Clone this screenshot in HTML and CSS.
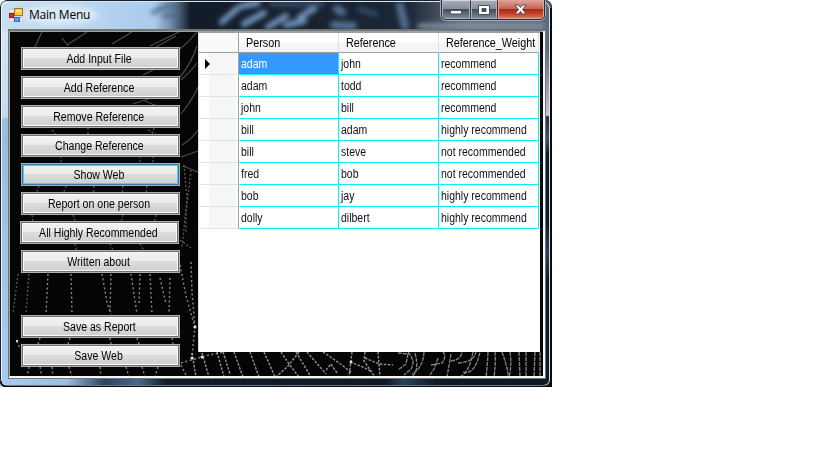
FILE: index.html
```html
<!DOCTYPE html>
<html lang="en">
<head>
<meta charset="utf-8">
<title>Main Menu</title>
<link rel="stylesheet" href="styles.css">
</head>
<body>
<div class="window">
  <svg class="glass" width="552" height="387" viewBox="0 0 552 387" aria-hidden="true">
    <defs>
      <linearGradient id="sky" x1="0" x2="1"><stop offset="0" stop-color="#c9def1"/><stop offset=".13" stop-color="#bdd8f1"/><stop offset=".28" stop-color="#a9cbed"/><stop offset=".31" stop-color="#6f8bab"/><stop offset=".345" stop-color="#131c29"/><stop offset=".74" stop-color="#1b2637"/><stop offset=".84" stop-color="#66707d"/><stop offset="1" stop-color="#59677a"/></linearGradient>
      <linearGradient id="left" x1="0" x2="0" y1="0" y2="1"><stop offset="0" stop-color="#d7e5f3"/><stop offset=".24" stop-color="#c6d9eb"/><stop offset=".25" stop-color="#9dbcdb"/><stop offset="1" stop-color="#a9cbed"/></linearGradient>
      <linearGradient id="right" x1="0" x2="0" y1="0" y2="1"><stop offset="0" stop-color="#526780"/><stop offset=".1" stop-color="#626b78"/><stop offset=".275" stop-color="#c4c6c9"/><stop offset=".28" stop-color="#252f3c"/><stop offset=".34" stop-color="#3e536c"/><stop offset=".38" stop-color="#101923"/><stop offset=".56" stop-color="#101923"/><stop offset=".64" stop-color="#2c415d"/><stop offset=".72" stop-color="#101923"/></linearGradient>
      <linearGradient id="bottom" x1="0" x2="1"><stop offset="0" stop-color="#a9cbed"/><stop offset=".12" stop-color="#9cbee0"/><stop offset=".19" stop-color="#2c4260"/><stop offset=".25" stop-color="#4b678a"/><stop offset=".3" stop-color="#111b29"/><stop offset=".7" stop-color="#101923"/><stop offset=".73" stop-color="#2c415d"/><stop offset=".79" stop-color="#101923"/></linearGradient>
      <filter id="soft" x="-20%" y="-50%" width="140%" height="200%"><feGaussianBlur stdDeviation="2.600"/></filter>
      <clipPath id="bar"><rect x="1" y="1" width="550" height="29"/></clipPath>
    </defs>
    <rect width="552" height="31" fill="url(#sky)"/>
    <rect y="31" width="9" height="356" fill="url(#left)"/>
    <rect x="543" y="12" width="9" height="375" fill="url(#right)"/>
    <rect y="378" width="552" height="9" fill="url(#bottom)"/>
    <g clip-path="url(#bar)"><g filter="url(#soft)" fill="none" stroke-linecap="round">
      <path d="M153 13q10-8 24-7M164 16l14-1" stroke="#4d6685" stroke-width="4"/>
      <path d="M222 22l16-14M242 6l16-3M244 24l20-11M268 27l18-11M286 25l18-4M300 17l14-8" stroke="#7195bd" stroke-width="6"/>
      <path d="M334 25l19 1M337 9l5 3M400 6l5 20" stroke="#536f90" stroke-width="8"/>
      <path d="M272 4h50M360 9l15 5" stroke="#304967" stroke-width="6"/>
      <path d="M420 26h122" stroke="#8695a8" stroke-width="5"/>
      <ellipse cx="60" cy="15" rx="38" ry="10" fill="#dbe8f5" stroke="none"/>
    </g></g>
    <path d="M1.500 380V8Q1.500 2 8 2.500" fill="none" stroke="#eff7ff"/>
    <path d="M7 1.500h538M544 2q5 1 5.500 7v370q0 6-6 6.500H8q-6 0-6.500-6" fill="none" stroke="#dce4ec"/>
    <path d="M.5 380V7Q.5.500 7 .500h538q6.500 0 6.500 7" fill="none" stroke="#172131"/>
    <path d="M551 8v378.500H7q-6 0-6.500-6" fill="none" stroke="#080c12" stroke-width="2"/>
  </svg>

  <header class="titlebar">
    <svg class="app-icon" width="14" height="14" viewBox="0 0 14 14" aria-hidden="true">
      <path d="M0 1h6v4H0zM0 10h5v4H0zM11 9h3v5h-3z" fill="#e9ecee" stroke="#a8afb5" stroke-width=".6"/>
      <rect x="5.500" y=".5" width="8" height="7" fill="#f8ca36" stroke="#a77915"/><path d="M7 2h5v2H7z" fill="#ffeb9c"/>
      <rect x=".5" y="5.500" width="4" height="4" fill="#d8322b" stroke="#931c18"/>
      <rect x="5.500" y="9.500" width="5" height="4" fill="#5a9bec" stroke="#3c70bc"/>
    </svg>
    <h1 class="title">Main Menu</h1>
    <div class="controls">
      <span class="control minimize"><svg width="12" height="6" viewBox="0 0 12 6"><path d="M.5 1.500h11v3.500H.5z" fill="#fff" stroke="#4a515d"/></svg></span>
      <span class="control maximize"><svg width="12" height="10" viewBox="0 0 12 10"><path fill-rule="evenodd" d="M.5.500h11v9H.5zM4 3.500v3h4v-3z" fill="#fff" stroke="#4a515d"/></svg></span>
      <span class="control close"><svg width="13" height="11" viewBox="0 0 13 11"><path d="M.8 1h3.700l2 2.500L8.500 1h3.700L8.500 5.500l3.700 4.500H8.500l-2-2.500-2 2.500H.8l3.700-4.500z" fill="#fff" stroke="#584b52"/></svg></span>
    </div>
  </header>

  <main class="client">
    <svg class="web" width="532" height="345" viewBox="10 32 532 345" fill="none" aria-hidden="true">
      <g stroke="#858585" stroke-width="1.200" opacity=".55">
        <path d="M33 51L42 32M62 38l6 8M67 45l20-13M112 44l20-12M150 46l29-14M176 36l-20 11M180 49q9-7 17-17M180 77q11-13 17-31M181 80q11-10 16-17M181 114q12-15 17-27M182 145q10-6 16-15M143 75l18-9M133 104l24-8M145 101l12 5M181 157q9-3 17-6M183 166l15 6"/>
      </g>
      <g stroke="#c3c3c3" stroke-width="1.300" stroke-dasharray="2 2" opacity=".45">
        <path d="M52 130l4 5M88 128v6M154 128l-2 6M148 130l8 4M140 156v8M153 156v8M61 156v8M39 186l-3 8M66 186l-3 8M94 186l-1 8M123 186l-1 8M147 186l-1 8M32 215l1 8M73 215l3 8M123 215l-2 8M156 215l-2 8M75 244l2 8M110 244l4 8M140 244l5 8M184 165l3 33-5 50M191 170l-5 43 0 20M180 240l11 8M18 274l-5 40M29 274l-3 38"/>
      </g>
      <g stroke="#d0d0d0" stroke-width="1.400" stroke-dasharray="2 2.500" opacity=".65">
        <path d="M48 274l-2 40M71 274l1 40M102 274l5 29 4 11M111 274l-1 40M131 274l6 40M140 274l-1 30M150 274l2 40M160 278l6 26M170 278l-1 36M180 265l6 31 9 31-3 28M191 262l1 30 3 35M17 341l3 8M40 338l-2 6M70 338l-2 6M110 338l1 6M137 338l2 6M172 338l1 6M29 367l-2 10M40 367l2 10M52 367l1 10M69 367l3 10M100 367l1 10M126 367l3 10M142 367l3 10M158 367l-3 10M181 365l6 12M181 363l28-8 16-3"/>
      </g>
      <g stroke="#dadada" stroke-width="1.400" stroke-dasharray="2.500 1.500" opacity=".68">
        <path d="M192 353l4 24M202 353l7 24M217 352l7 25M223 352l7 22M234 352l9 25M250 352l9 25M264 352l11 25M281 352l8 12 10 13M299 352l-11 14-12 11M296 352l15 25M307 352l19 22M326 370l5-6 6 9M323 352l19 13 10 8M352 352l-3 25M365 352l-1 9 11 16M365 358l14 6 14 1M350 362l13 5 9 5M378 352l2 25"/>
      </g>
      <g stroke="#d4d4d4" stroke-width="1.300" stroke-dasharray="4 1" opacity=".62">
        <path d="M398 353l10 1-2 10-8 6M408 352q8 9 3 17l-7 6M415 353q5 19-4 24M424 352q-1 16-12 22M431 365l11-2q5-7 1-11M438 358l-4 11-4 6M451 354l-4 23M451 361q10-1 11-9M458 363q16-1 18-11M473 352q-4 22-14 25M463 372q13 4 18-25M488 352q-1 20-2 25M495 352q1 10-1 25M502 352q7 20 6 25M510 352q2 14-1 25M519 352l1 25M526 352v25M535 352l-1 25M540 352v25"/>
      </g>
      <g fill="#ddd"><circle cx="195" cy="327" r="1.600"/><circle cx="192" cy="358" r="1.600"/><circle cx="17" cy="341" r="1.200"/><circle cx="202" cy="357" r="1.500"/><circle cx="351" cy="362" r="1.500"/></g>
    </svg>

    <nav class="menu">
      <button class="btn"><span>Add Input File</span></button>
      <button class="btn"><span>Add Reference</span></button>
      <button class="btn"><span>Remove Reference</span></button>
      <button class="btn"><span>Change Reference</span></button>
      <button class="btn focused"><span>Show Web</span></button>
      <button class="btn"><span>Report on one person</span></button>
      <button class="btn shifted"><span>All Highly Recommended</span></button>
      <button class="btn"><span>Written about</span></button>
      <button class="btn save"><span>Save as Report</span></button>
      <button class="btn"><span>Save Web</span></button>
    </nav>

    <section class="grid">
      <table>
        <colgroup><col class="stub"><col class="data"><col class="data"><col class="data"></colgroup>
        <thead><tr><th></th><th><span>Person</span></th><th><span>Reference</span></th><th><span>Reference_Weight</span></th></tr></thead>
        <tbody>
          <tr><th><i class="pointer"></i></th><td class="selected"><span>adam</span></td><td><span>john</span></td><td><span>recommend</span></td></tr>
          <tr><th></th><td><span>adam</span></td><td><span>todd</span></td><td><span>recommend</span></td></tr>
          <tr><th></th><td><span>john</span></td><td><span>bill</span></td><td><span>recommend</span></td></tr>
          <tr><th></th><td><span>bill</span></td><td><span>adam</span></td><td><span>highly recommend</span></td></tr>
          <tr><th></th><td><span>bill</span></td><td><span>steve</span></td><td><span>not recommended</span></td></tr>
          <tr><th></th><td><span>fred</span></td><td><span>bob</span></td><td><span>not recommended</span></td></tr>
          <tr><th></th><td><span>bob</span></td><td><span>jay</span></td><td><span>highly recommend</span></td></tr>
          <tr><th></th><td><span>dolly</span></td><td><span>dilbert</span></td><td><span>highly recommend</span></td></tr>
        </tbody>
      </table>
    </section>
  </main>
</div>
</body>
</html>
```
FILE: styles.css
```css
* { box-sizing: border-box; }
body { margin: 0; background: #fff; color: #000; font: 12px "Liberation Sans", Arial, sans-serif; overflow: hidden; }
.window { position: relative; width: 552px; height: 387px; padding: 0 6px 8px 8px; display: flex; flex-direction: column; border-radius: 7px 7px 0 0; overflow: hidden; }
.glass { position: absolute; left: 0; top: 0; }
.titlebar { position: relative; height: 29px; display: flex; align-items: flex-start; padding-left: 1px; flex: none; }
.app-icon { margin-top: 8px; }
.title { margin: 6px 0 0 6px; font: 12px/18px "Open Sans", "Noto Sans", sans-serif; letter-spacing: -.22px; }
.controls { display: flex; margin: 0 1px 0 auto; width: 104px; height: 20px; border: 1px solid #242d39; border-top: 0; border-radius: 0 0 5px 5px; overflow: hidden; box-shadow: 0 0 0 1px #a1abb7; }
.control { display: flex; align-items: center; justify-content: center; width: 28px; border: 1px solid #a9b2bd; border-top-color: #d3d7dd; background: linear-gradient(#a7acb4 0, #858d98 47%, #424b59 49%, #7a8999 100%); }
.control + .control { border-left-color: #303947; width: 27px; box-shadow: inset 1px 0 #a9b2bd; }
.control.close { width: 47px; border-color: #dda398; border-left-color: #592219; background: linear-gradient(#dc9e91 0, #c46353 46%, #a92718 49%, #c64b30 80%, #dd785d 100%); box-shadow: inset 1px 0 #dda398; }
.control + .control.close { width: 47px; }
.minimize svg { margin-top: 4px; }
.client { position: relative; flex: 1; display: flex; border: solid #737873; border-width: 2px 1px 1px; border-right-color: #f5f5f5; border-bottom-color: #f5f5f5; outline: 1px solid #6d757b; outline-offset: -1px; background: #050505; padding: 1px 2px 1px 1px; box-shadow: inset -2px -2px #f7f7f7, inset 1px 1px #a0a0a0; }
.web { position: absolute; left: 1px; top: 1px; }
.menu { position: relative; width: 188px; padding: 15px 0 0 11px; display: flex; flex-direction: column; gap: 6px; }
.btn { width: 159px; height: 23px; margin: 0; padding: 1px 3px 0 0; border: 1px solid #b0b0b0; border-radius: 0; font: 12px/20px "Liberation Sans", Arial, sans-serif; color: #000; background: linear-gradient(#f3f3f3 0, #ebebeb 48%, #dcdcdc 50%, #cecece 100%); box-shadow: inset 0 0 0 1px #707070, inset 0 0 0 2px #fafafa; white-space: nowrap; }
.btn span { display: inline-block; transform: scaleX(.88); }
.focused { box-shadow: inset 0 0 0 1px #35799e, inset 0 0 0 2px #5ac8f3; }
.shifted { margin-left: -1px; }
.save { margin-top: 36px; }
.grid { position: relative; width: 342px; height: 320px; background: #fff; border-top: 1px solid #a0a0a0; border-left: 1px solid #ddd; }
table { width: 340px; table-layout: fixed; border-collapse: separate; border-spacing: 0; }
.stub { width: 40px; }
.data { width: 100px; }
th, td { padding: 0; text-align: left; font-weight: normal; white-space: nowrap; line-height: 16px; }
th span, td span { display: block; width: max-content; transform: scaleX(.875); transform-origin: left; }
thead th { height: 20px; padding: 1px 0 0 7px; border-right: 1px solid #dedfe1; border-bottom: 1px solid #a0a0a0; background: linear-gradient(#fff 0 47%, #f7f8f9 49%, #f2f3f4); }
thead th span { transform: scaleX(.9); }
thead th:first-child { border-right-color: #a0a0a0; background: #fafafa; }
tbody th { height: 22px; border-right: 1px solid #a0a0a0; border-bottom: 1px solid #e2e3e4; background: linear-gradient(90deg, #fff 0 10px, #f5f6f8 10px 37px, #fff 37px); }
td { height: 22px; padding: 1px 0 0 2px; border-right: 1px solid #00f4f4; border-bottom: 1px solid #00f4f4; color: #101020; }
.selected { background: #3399ff; color: #fff; }
.pointer { display: block; width: 0; height: 0; margin-left: 6px; border: 5px solid transparent; border-left-color: #000; border-right: 0; }
```
